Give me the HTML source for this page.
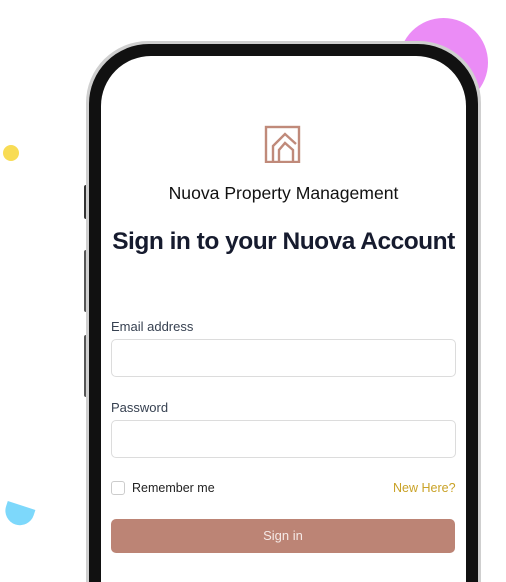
<!DOCTYPE html>
<html style="width:506px;height:582px;overflow:hidden;"><head><meta charset="utf-8"><style>
html,body{margin:0;padding:0;}
body{width:506px;height:582px;position:relative;overflow:hidden;background:#fff;font-family:"Liberation Sans",sans-serif;}
.abs{position:absolute;}
</style></head><body>
<div class="abs" style="left:399px;top:18px;width:89px;height:89px;border-radius:50%;background:#eb8cf6;"></div>
<div class="abs" style="left:3px;top:145px;width:16px;height:16px;border-radius:50%;background:#f8dc55;"></div>
<div class="abs" style="left:4px;top:505px;width:29px;height:20px;background:#7dd8fb;border-radius:0 0 18px 18px / 0 0 18px 18px;transform:rotate(18deg);"></div>
<div class="abs" style="left:84px;top:185px;width:4px;height:34px;background:#333;border-radius:2px;"></div>
<div class="abs" style="left:84px;top:250px;width:4px;height:62px;background:#555;border-radius:2px;"></div>
<div class="abs" style="left:84px;top:335px;width:4px;height:62px;background:#555;border-radius:2px;"></div>
<div class="abs" style="left:477px;top:275px;width:4px;height:105px;background:#555;border-radius:2px;"></div>
<div class="abs" style="left:86px;top:41px;width:395px;height:541px;border-radius:62px 62px 0 0;background:#cfcfcf;"></div>
<div class="abs" style="left:89px;top:44px;width:389px;height:538px;border-radius:60px 60px 0 0;background:#111;"></div>
<div class="abs" style="left:101px;top:56px;width:365px;height:526px;border-radius:50px 50px 0 0;background:#fff;"></div>
<svg class="abs" style="left:264px;top:125px" width="38" height="38" viewBox="0 0 38 38">
<g fill="none" stroke="#c08a7a" stroke-width="2.4">
<rect x="2" y="2" width="33" height="35"/>
<polyline points="9,37 9,21 21,9 32,19"/>
<polyline points="15,37 15,25 21,18 29,25 29,37"/>
</g></svg>
<div class="abs" style="left:101px;width:365px;top:183px;text-align:center;font-size:17.6px;color:#111;">Nuova Property Management</div>
<div class="abs" style="left:101px;width:365px;top:228px;text-align:center;font-size:24.5px;font-weight:bold;color:#161b2e;letter-spacing:-0.5px;">Sign in to your Nuova Account</div>
<div class="abs" style="left:111px;top:319px;font-size:13px;color:#374151;">Email address</div>
<div class="abs" style="left:111px;top:339px;width:343px;height:36px;border:1px solid #dcdcdc;border-radius:5px;"></div>
<div class="abs" style="left:111px;top:400px;font-size:13px;color:#374151;">Password</div>
<div class="abs" style="left:111px;top:420px;width:343px;height:36px;border:1px solid #dcdcdc;border-radius:5px;"></div>
<div class="abs" style="left:111px;top:481px;width:12px;height:12px;border:1px solid #ccc;border-radius:3px;"></div>
<div class="abs" style="left:132px;top:481px;font-size:12.5px;color:#222;">Remember me</div>
<div class="abs" style="left:393px;top:481px;font-size:12.5px;color:#c9a227;">New Here?</div>
<div class="abs" style="left:111px;top:519px;width:344px;height:34px;border-radius:5px;background:#bc8475;color:#f5e9e6;font-size:13px;text-align:center;line-height:34px;">Sign in</div>
</body></html>
